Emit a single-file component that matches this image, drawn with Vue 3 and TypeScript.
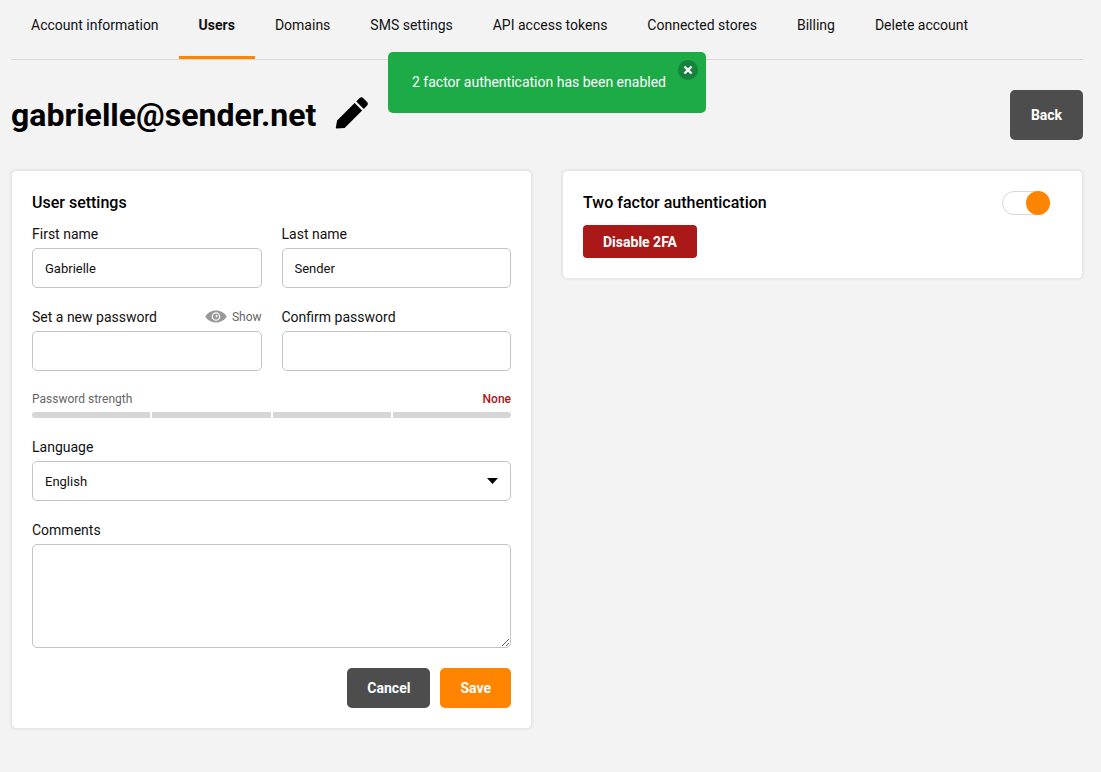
<script setup lang="ts">
const tabs: string[] = ['Account information', 'Users', 'Domains', 'SMS settings', 'API access tokens', 'Connected stores', 'Billing', 'Delete account']
</script>

<template>
  <div class="page">
    <nav class="tabs">
      <a v-for="t in tabs" :key="t" class="tab" :class="{ active: t === 'Users' }">{{ t }}</a>
    </nav>

    <div class="toast">
      <span>2 factor authentication has been enabled</span>
      <span class="toast-close">
        <svg width="10" height="10" viewBox="0 0 10 10"><path d="M1.500 1.500l7 7M8.500 1.500l-7 7" stroke="#fff" stroke-width="2.400" fill="none" /></svg>
      </span>
    </div>

    <header class="head">
      <div class="title">
        <h1>gabrielle@sender.net</h1>
        <svg class="pencil" width="34" height="34" viewBox="0 0 34 34">
          <path d="M1.600 32.600c-.5.1-.9-.3-.8-.8l1.300-7.200L19.600 7.100l7.500 7.500L9.600 32.100z" fill="#000" />
          <path d="M21.300 5.400l3.300-3.300c1-1 2.500-1 3.500 0l4 4c1 1 1 2.500 0 3.500l-3.300 3.300z" fill="#000" />
        </svg>
      </div>
      <button class="btn dark back">Back</button>
    </header>

    <main class="columns">
      <section class="card settings">
        <h2>User settings</h2>
        <div class="row">
          <div class="field">
            <label>First name</label>
            <input class="control" type="text" value="Gabrielle" />
          </div>
          <div class="field">
            <label>Last name</label>
            <input class="control" type="text" value="Sender" />
          </div>
        </div>
        <div class="row second">
          <div class="field">
            <div class="label-row">
              <label>Set a new password</label>
              <span class="show">
                <svg width="22" height="13" viewBox="0 0 22 13">
                  <path fill-rule="evenodd" d="M11 .5C6.200.5 2.400 3 .2 6.500 2.400 10 6.200 12.500 11 12.500S19.600 10 21.800 6.500C19.600 3 15.800.5 11 .5zM11 2.200a4.300 4.300 0 1 1 0 8.600 4.300 4.300 0 0 1 0-8.600z" fill="#999" />
                  <path fill-rule="evenodd" d="M11 3.400a3.100 3.100 0 1 1 0 6.200 3.100 3.100 0 0 1 0-6.200zM11.600 5a1.100 1.100 0 1 0 0 2.200 1.100 1.100 0 0 0 0-2.200z" fill="#999" />
                </svg>
                Show
              </span>
            </div>
            <input class="control" type="password" />
          </div>
          <div class="field">
            <label>Confirm password</label>
            <input class="control" type="password" />
          </div>
        </div>

        <div class="strength">
          <div class="strength-head">
            <span>Password strength</span>
            <b>None</b>
          </div>
          <div class="bar"><i /><i /><i /><i /></div>
        </div>

        <div class="field lang">
          <label>Language</label>
          <div class="select control">
            <span>English</span>
            <svg width="11" height="6" viewBox="0 0 11 6"><path d="M0 0h11L5.500 6z" fill="#000" /></svg>
          </div>
        </div>

        <div class="field comments">
          <label>Comments</label>
          <textarea class="control area"></textarea>
        </div>

        <div class="actions">
          <button class="btn dark">Cancel</button>
          <button class="btn orange">Save</button>
        </div>
      </section>

      <section class="card two-fa">
        <div class="tf-head">
          <h2>Two factor authentication</h2>
          <span class="switch"><span class="knob" /></span>
        </div>
        <button class="disable">Disable 2FA</button>
      </section>
    </main>
  </div>
</template>

<style>
html, body { background: #f3f3f3; }
</style>

<style scoped>
.page {
  position: relative;
  box-sizing: border-box;
  width: 1101px;
  height: 772px;
  padding: 0 18px 0 11px;
  background: #f3f3f3;
  color: #000;
  font-family: Roboto, "Liberation Sans", sans-serif;
  font-size: 14px;
  overflow: hidden;
}
.tabs {
  display: flex;
  height: 59px;
  border-bottom: 1px solid #d8d8d8;
}
.tab {
  box-sizing: border-box;
  height: 59px;
  padding: 17px 20px 0;
  line-height: 17px;
  color: #111;
  white-space: nowrap;
}
.tab.active {
  font-weight: 700;
  border-bottom: 3px solid #ff8500;
}
.toast {
  position: absolute;
  left: 388px;
  top: 52px;
  box-sizing: border-box;
  width: 318px;
  height: 61px;
  padding: 21px 24px 0;
  background: #1cab47;
  border-radius: 5px;
  color: #fff;
  line-height: 19px;
}
.toast-close {
  position: absolute;
  right: 8px;
  top: 8px;
  width: 20px;
  height: 20px;
  border-radius: 50%;
  background: #16823a;
  display: flex;
  align-items: center;
  justify-content: center;
}
.head {
  display: flex;
  justify-content: space-between;
  align-items: flex-start;
  height: 110px;
  padding-top: 30px;
  box-sizing: border-box;
}
.title {
  display: flex;
  align-items: center;
  height: 50px;
}
h1 {
  margin: 0;
  font-size: 32px;
  font-weight: 700;
  line-height: 50px;
}
.pencil { margin-left: 19px; margin-top: -4px; }
.btn {
  border: 0;
  border-radius: 5px;
  color: #fff;
  font-family: inherit;
  font-size: 14px;
  font-weight: 700;
  height: 40px;
  padding: 0 20px;
}
.dark { background: #4d4d4d; }
.orange { background: #ff8500; }
.back { height: 50px; width: 73px; padding: 0; }
.columns {
  display: flex;
  align-items: flex-start;
  gap: 30px;
}
.card {
  box-sizing: border-box;
  flex: 0 0 521px;
  background: #fff;
  border: 1px solid #e6e6e6;
  border-radius: 5px;
  box-shadow: 0 0 3px rgba(0, 0, 0, 0.1);
  padding: 20px;
}
.settings { height: 559px; }
.two-fa { height: 109px; }
h2 {
  margin: 0;
  font-size: 16px;
  font-weight: 500;
  line-height: 23px;
}
.row {
  display: flex;
  gap: 20px;
  margin-top: 10px;
}
.row.second { margin-top: 19px; }
.field { flex: 1 1 0; min-width: 0; }
label {
  display: block;
  height: 24px;
  line-height: 20px;
  color: #111;
}
.control {
  display: block;
  box-sizing: border-box;
  width: 100%;
  height: 40px;
  border: 1px solid #c4c4c4;
  border-radius: 5px;
  background: #fff;
  padding: 0 12px;
  font-family: inherit;
  font-size: 13px;
  color: #111;
  outline: none;
}
.label-row {
  display: flex;
  justify-content: space-between;
}
.show {
  display: flex;
  align-items: flex-start;
  gap: 5px;
  font-size: 12px;
  line-height: 20px;
  color: #666;
}
.show svg { margin-top: 3px; }
.strength { margin-top: 21px; }
.strength-head {
  display: flex;
  justify-content: space-between;
  font-size: 12px;
  line-height: 14px;
  color: #666;
}
.strength-head b { color: #aa1818; font-weight: 500; }
.bar {
  display: flex;
  gap: 2px;
  margin-top: 6px;
  height: 6px;
  border-radius: 3px;
  overflow: hidden;
}
.bar i { flex: 1; background: #d6d6d6; }
.lang { margin-top: 19px; }
.select {
  display: flex;
  align-items: center;
  justify-content: space-between;
  padding-right: 12px;
}
.comments { margin-top: 19px; }
.area { height: 104px; resize: vertical; padding: 10px 12px; }
.actions {
  display: flex;
  justify-content: flex-end;
  gap: 10px;
  margin-top: 20px;
}
.tf-head {
  display: flex;
  justify-content: space-between;
  align-items: center;
  height: 23px;
  padding-right: 12px;
}
.switch {
  position: relative;
  display: block;
  box-sizing: border-box;
  width: 48px;
  height: 24px;
  border: 1px solid #d8d8d8;
  border-radius: 12px;
  background: #fff;
}
.knob {
  position: absolute;
  right: -1px;
  top: -1px;
  width: 24px;
  height: 24px;
  border-radius: 50%;
  background: #ff8500;
}
.disable {
  display: block;
  margin-top: 11px;
  width: 114px;
  height: 33px;
  border: 0;
  border-radius: 4px;
  background: #aa1818;
  color: #fff;
  font-family: inherit;
  font-size: 14px;
  font-weight: 700;
}
</style>
